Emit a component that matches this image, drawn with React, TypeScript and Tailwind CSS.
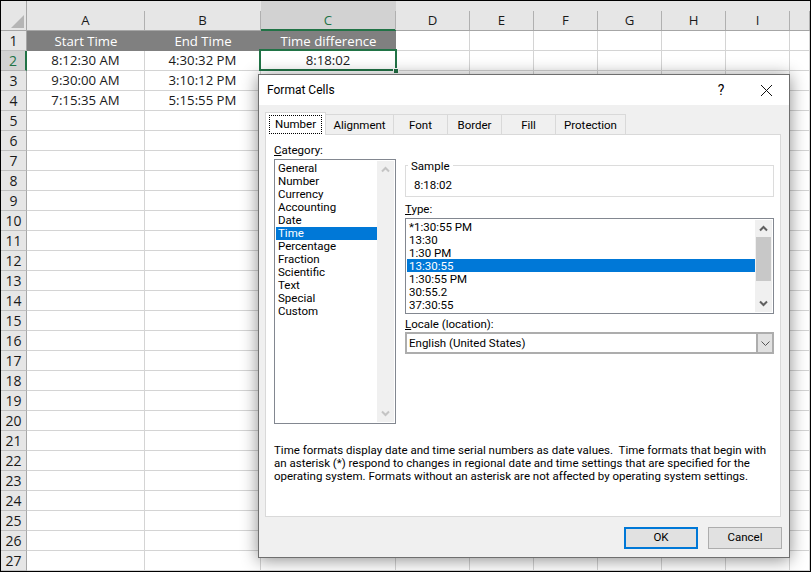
const columns = ['A', 'B', 'C', 'D', 'E', 'F', 'G', 'H', 'I', ''];
const rows = Array.from({ length: 27 }, (_, i) => i + 1);
const data: Record<number, string[]> = {
  2: ['8:12:30 AM', '4:30:32 PM', '8:18:02'],
  3: ['9:30:00 AM', '3:10:12 PM', ''],
  4: ['7:15:35 AM', '5:15:55 PM', ''],
};
const titles = ['Start Time', 'End Time', 'Time difference'];
const categories = ['General', 'Number', 'Currency', 'Accounting', 'Date', 'Time', 'Percentage', 'Fraction', 'Scientific', 'Text', 'Special', 'Custom'];
const types = ['*1:30:55 PM', '13:30', '1:30 PM', '13:30:55', '1:30:55 PM', '30:55.2', '37:30:55'];
const tabs = [
  { label: 'Alignment', width: 'w-[68px]' },
  { label: 'Font', width: 'w-[54px]' },
  { label: 'Border', width: 'w-[54px]' },
  { label: 'Fill', width: 'w-[54px]' },
  { label: 'Protection', width: 'w-[70px]' },
];

function Arrow({ up }: { up?: boolean }) {
  return (
    <svg width="9" height="7" viewBox="0 0 9 7">
      <path d={up ? 'M1 5.5 L4.5 2 L8 5.5' : 'M1 1.5 L4.5 5 L8 1.5'} fill="none" stroke="currentColor" strokeWidth="2" />
    </svg>
  );
}

function Sheet() {
  return (
    <div className="grid grid-cols-[26px_118px_116px_135px_74px_64px_64px_64px_64px_64px_20px] grid-rows-[30px] auto-rows-[20px] text-[13.2px] text-[#1a1a1a]">
      <div className="flex items-end justify-end bg-[#e6e6e6] border-r border-b border-[#a6a6a6] pr-[2px] pb-[2px]">
        <svg width="13" height="13" viewBox="0 0 13 13">
          <path d="M13 0 V13 H0 Z" fill="#b5b5b5" />
        </svg>
      </div>
      {columns.map((col) => (
        <div
          key={col}
          className={`flex border-b ${col === 'C' ? 'bg-[#d2d2d2] text-[#217346] border-[#217346] shadow-[inset_0_-1px_0_#217346]' : 'bg-[#e6e6e6] border-[#a6a6a6]'}`}
        >
          <span className="flex-1 pt-[10px] text-center leading-[19px]">{col}</span>
          <span className="w-px h-[19px] self-end bg-[#b0b0b0]" />
        </div>
      ))}
      {rows.map((row) => (
        <div key={row} className="contents">
          <div
            className={`flex items-center justify-center border-b text-[14px] ${
              row === 2
                ? 'bg-[#d2d2d2] text-[#217346] border-[#b4b4b4] border-r-2 border-r-[#217346]'
                : 'bg-[#e6e6e6] border-[#c0c0c0] border-r border-r-[#a6a6a6]'
            }`}
          >
            {row}
          </div>
          {columns.map((col, i) => {
            if (row === 1 && i < 3) {
              return (
                <div key={col} className="flex items-center justify-center pt-px bg-[#808080] text-white">
                  {titles[i]}
                </div>
              );
            }
            const selected = row === 2 && col === 'C';
            return (
              <div key={col} className="relative flex items-center justify-center pt-px border-r border-b border-[#d4d4d4]">
                {data[row]?.[i]}
                {selected && (
                  <>
                    <div className="absolute z-10 -left-[2px] -top-[2px] w-[138px] h-[22px] border-2 border-[#217346]" />
                    <div className="absolute z-10 left-[132px] top-[17px] w-[6px] h-[6px] bg-[#217346] border border-white" />
                  </>
                )}
              </div>
            );
          })}
        </div>
      ))}
    </div>
  );
}

function FormatCells() {
  return (
    <div className="absolute z-20 left-[257px] top-[73px] w-[532px] h-[484px] flex flex-col border border-[#6f6f6f] bg-[#f0f0f0] text-[11.5px] text-black font-['Roboto',sans-serif] shadow-[0_2px_16px_rgba(0,0,0,0.45)]">
      <div className="flex items-center h-[30px] bg-white pl-[8px] text-[12px]">
        <span className="flex-1">Format Cells</span>
        <span className="w-[14px] text-center text-[14px] mr-[32px]">?</span>
        <svg width="13" height="13" viewBox="0 0 13 13" className="mr-[16px]">
          <path d="M1 1 L12 12 M12 1 L1 12" stroke="#111" strokeWidth="1" />
        </svg>
      </div>

      <div className="flex items-end h-[29px] pl-[6px]">
        <div className="flex items-center justify-center w-[61px] h-[23px] -mb-px z-10 pt-px bg-white border border-b-0 border-[#d9d9d9]">
          <span className="px-[5px] leading-[17px] outline-1 outline-dotted outline-black">Number</span>
        </div>
        {tabs.map((tab) => (
          <div key={tab.label} className={`flex items-center justify-center pt-[2px] h-[20px] ${tab.width} border border-l-0 border-b-0 border-[#d9d9d9] bg-[#f0f0f0]`}>
            {tab.label}
          </div>
        ))}
      </div>

      <div className="h-[383px] ml-[6px] mr-[8px] border border-[#d9d9d9] bg-white pl-[8px] pr-[6px]">
        <div className="flex gap-[9px]">
          <div className="w-[122px] shrink-0 pt-[9px]">
            <div className="h-[15px] leading-[13px]"><u>C</u>ategory:</div>
            <div className="flex h-[265px] border border-[#828790] p-px">
              <div className="flex-1 pt-px leading-[13px]">
                {categories.map((c) => (
                  <div key={c} className={`h-[13px] pl-[2px] ${c === 'Time' ? 'bg-[#0078d7] text-white' : ''}`}>{c}</div>
                ))}
              </div>
              <div className="flex flex-col items-center justify-between w-[17px] bg-[#f0f0f0] py-[5px] text-[#c4c4c4]">
                <Arrow up />
                <Arrow />
              </div>
            </div>
          </div>

          <div className="w-[369px] shrink-0 pt-[30px]">
            <div className="relative h-[32px] border border-[#dcdcdc] flex items-center pl-[8px] pt-[10px]">
              8:18:02
              <span className="absolute left-[2px] -top-[6px] px-[3px] bg-white leading-[13px]">Sample</span>
            </div>
            <div className="h-[14px] mt-[5px] mb-[2px] leading-[15px]"><u>T</u>ype:</div>
            <div className="flex h-[96px] border border-[#828790] p-px">
              <div className="flex-1 leading-[14px]">
                {types.map((t) => (
                  <div key={t} className={`h-[13px] pl-[2px] ${t === '13:30:55' ? 'bg-[#0078d7] text-white' : ''}`}>{t}</div>
                ))}
              </div>
              <div className="flex flex-col items-center w-[17px] bg-[#f0f0f0] text-[#606060]">
                <div className="flex items-center justify-center h-[17px] shrink-0"><Arrow up /></div>
                <div className="w-[15px] h-[44px] bg-[#c8c8c8]" />
                <div className="flex items-center justify-center h-[17px] mt-auto shrink-0"><Arrow /></div>
              </div>
            </div>
            <div className="h-[14px] mt-[3px] mb-[1px] leading-[14px]"><u>L</u>ocale (location):</div>
            <div className="flex items-center h-[22px] border-2 border-[#adadad]">
              <span className="flex-1 pl-[2px] pt-px">English (United States)</span>
              <div className="flex items-center justify-center w-[16px] h-full bg-[#e1e1e1] border-l-2 border-[#adadad]">
                <svg width="9" height="5" viewBox="0 0 9 5">
                  <path d="M0.5 0.5 L4.5 4.5 L8.5 0.5" fill="none" stroke="#555" strokeWidth="1" />
                </svg>
              </div>
            </div>
          </div>
        </div>
        <p className="mt-[20px] leading-[13px] whitespace-pre">
          {'Time formats display date and time serial numbers as date values.  Time formats that begin with\nan asterisk (*) respond to changes in regional date and time settings that are specified for the\noperating system. Formats without an asterisk are not affected by operating system settings.'}
        </p>
      </div>

      <div className="flex justify-end gap-[10px] pt-[10px] pr-[7px]">
        <button className="w-[74px] h-[22px] bg-[#e1e1e1] border-2 border-[#0078d7]">OK</button>
        <button className="w-[74px] h-[22px] bg-[#e1e1e1] border border-[#adadad]">Cancel</button>
      </div>
    </div>
  );
}

export default function App() {
  return (
    <div className="relative w-[811px] h-[572px] overflow-hidden bg-white border border-black font-['Open_Sans',sans-serif]">
      <Sheet />
      <FormatCells />
    </div>
  );
}
